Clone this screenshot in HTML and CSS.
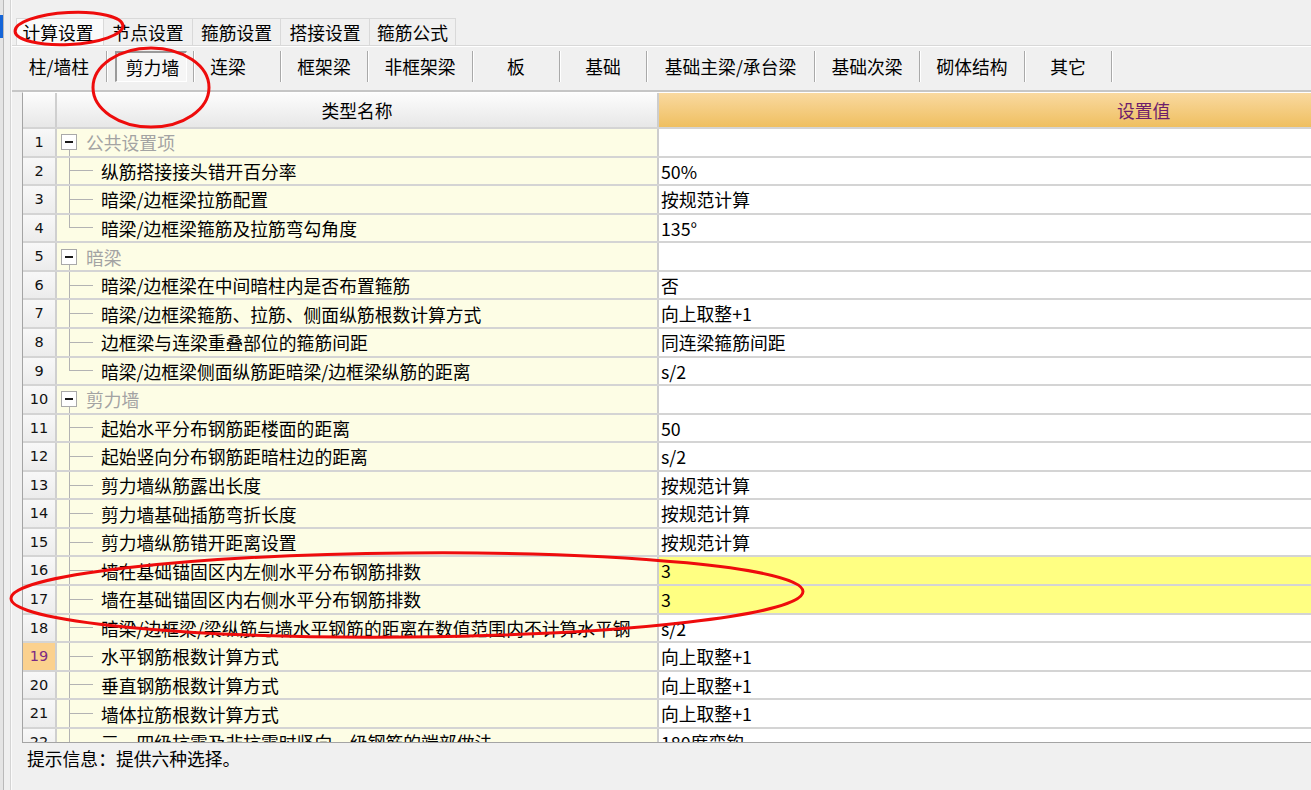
FILE: index.html
```html
<!DOCTYPE html>
<html lang="zh-CN">
<head>
<meta charset="utf-8">
<title>计算设置</title>
<link rel="stylesheet" href="styles.css">
</head>
<body>
<div class="app">
  <div class="side"><div class="side-mark"></div></div>
  <div class="main">
    <div class="tabs1">
      <div class="tab1 active w88">计算设置</div>
      <div class="tab1 w90">节点设置</div>
      <div class="tab1 w89">箍筋设置</div>
      <div class="tab1 w90">搭接设置</div>
      <div class="tab1 w87">箍筋公式</div>
    </div>
    <div class="tabs2">
      <div class="tab2 w87 nudge-l">柱/墙柱</div>
      <div class="tab2 w87 pressed"><span class="press-box">剪力墙</span></div>
      <div class="tab2 w87 nudge-ll">连梁</div>
      <div class="tab2 w87">框架梁</div>
      <div class="tab2 w105">非框架梁</div>
      <div class="tab2 w87">板</div>
      <div class="tab2 w87">基础</div>
      <div class="tab2 w168">基础主梁/承台梁</div>
      <div class="tab2 w105">基础次梁</div>
      <div class="tab2 w105">砌体结构</div>
      <div class="tab2 w87">其它</div>
    </div>
    <div class="grid-wrap">
      <div class="row head">
        <div class="num hnum"></div>
        <div class="name hname">类型名称</div>
        <div class="val hval">设置值</div>
      </div>

      <div class="row cat"><div class="num">1</div><div class="name"><span class="tree"><span class="box"></span></span><span class="cat-text">公共设置项</span></div><div class="val"></div></div>
      <div class="row child"><div class="num">2</div><div class="name"><span class="tree"></span>纵筋搭接接头错开百分率</div><div class="val">50%</div></div>
      <div class="row child"><div class="num">3</div><div class="name"><span class="tree"></span>暗梁/边框梁拉筋配置</div><div class="val">按规范计算</div></div>
      <div class="row child last"><div class="num">4</div><div class="name"><span class="tree"></span>暗梁/边框梁箍筋及拉筋弯勾角度</div><div class="val">135°</div></div>

      <div class="row cat"><div class="num">5</div><div class="name"><span class="tree"><span class="box"></span></span><span class="cat-text">暗梁</span></div><div class="val"></div></div>
      <div class="row child"><div class="num">6</div><div class="name"><span class="tree"></span>暗梁/边框梁在中间暗柱内是否布置箍筋</div><div class="val">否</div></div>
      <div class="row child"><div class="num">7</div><div class="name"><span class="tree"></span>暗梁/边框梁箍筋、拉筋、侧面纵筋根数计算方式</div><div class="val">向上取整+1</div></div>
      <div class="row child"><div class="num">8</div><div class="name"><span class="tree"></span>边框梁与连梁重叠部位的箍筋间距</div><div class="val">同连梁箍筋间距</div></div>
      <div class="row child last"><div class="num">9</div><div class="name"><span class="tree"></span>暗梁/边框梁侧面纵筋距暗梁/边框梁纵筋的距离</div><div class="val">s/2</div></div>

      <div class="row cat"><div class="num">10</div><div class="name"><span class="tree"><span class="box"></span></span><span class="cat-text">剪力墙</span></div><div class="val"></div></div>
      <div class="row child"><div class="num">11</div><div class="name"><span class="tree"></span>起始水平分布钢筋距楼面的距离</div><div class="val">50</div></div>
      <div class="row child"><div class="num">12</div><div class="name"><span class="tree"></span>起始竖向分布钢筋距暗柱边的距离</div><div class="val">s/2</div></div>
      <div class="row child"><div class="num">13</div><div class="name"><span class="tree"></span>剪力墙纵筋露出长度</div><div class="val">按规范计算</div></div>
      <div class="row child"><div class="num">14</div><div class="name"><span class="tree"></span>剪力墙基础插筋弯折长度</div><div class="val">按规范计算</div></div>
      <div class="row child"><div class="num">15</div><div class="name"><span class="tree"></span>剪力墙纵筋错开距离设置</div><div class="val">按规范计算</div></div>
      <div class="row child"><div class="num">16</div><div class="name"><span class="tree"></span>墙在基础锚固区内左侧水平分布钢筋排数</div><div class="val hl">3</div></div>
      <div class="row child"><div class="num">17</div><div class="name"><span class="tree"></span>墙在基础锚固区内右侧水平分布钢筋排数</div><div class="val hl">3</div></div>
      <div class="row child"><div class="num">18</div><div class="name"><span class="tree"></span>暗梁/边框梁/梁纵筋与墙水平钢筋的距离在数值范围内不计算水平钢</div><div class="val">s/2</div></div>
      <div class="row child"><div class="num cur">19</div><div class="name"><span class="tree"></span>水平钢筋根数计算方式</div><div class="val">向上取整+1</div></div>
      <div class="row child"><div class="num">20</div><div class="name"><span class="tree"></span>垂直钢筋根数计算方式</div><div class="val">向上取整+1</div></div>
      <div class="row child"><div class="num">21</div><div class="name"><span class="tree"></span>墙体拉筋根数计算方式</div><div class="val">向上取整+1</div></div>
      <div class="row child"><div class="num">22</div><div class="name"><span class="tree"></span>三、四级抗震及非抗震时竖向一级钢筋的端部做法</div><div class="val">180度弯钩</div></div>
    </div>
    <div class="status">提示信息：提供六种选择。</div>
  </div>
</div>
<svg class="marks" width="1311" height="790" viewBox="0 0 1311 790">
  <ellipse cx="69" cy="28.5" rx="54" ry="16" transform="rotate(-3 69 28.5)"/>
  <ellipse cx="151" cy="87.5" rx="58" ry="39.5"/>
  <ellipse cx="407" cy="595" rx="396" ry="42" transform="rotate(-0.5 407 595)"/>
</svg>
</body>
</html>
```

FILE: styles.css
```css
html, body {
  margin: 0;
  padding: 0;
}
body {
  width: 1311px;
  height: 790px;
  overflow: hidden;
  position: relative;
  background: #f0f0f0;
  font-family: "Noto Sans CJK SC", "Noto Sans CJK TC", sans-serif;
  font-size: 17.8px;
  color: #000;
}
.app {
  display: flex;
  height: 790px;
}
.side {
  width: 10px;
  flex: none;
  border-right: 1px solid #d4d4d4;
  background: linear-gradient(to right, #e4e4e4 0 3px, #b9b9b9 3px 4px, #efefef 4px);
  display: flex;
  flex-direction: column;
}
.side-mark {
  margin-top: 15px;
  width: 3px;
  height: 23px;
  background: #1565d8;
}
.main {
  flex: 1;
  min-width: 0;
  display: flex;
  flex-direction: column;
  border-left: 1px solid #fbfbfb;
}
.tabs1 {
  display: flex;
  margin: 18px 0 0 4px;
  height: 27px;
}
.tab1 {
  box-sizing: border-box;
  height: 27px;
  line-height: 26px;
  text-align: center;
  border: 1px solid #d9d9d9;
  border-bottom: none;
  margin-right: -1px;
  background: #f0f0f0;
  white-space: nowrap;
}
.tab1.active {
  background: #fafafa;
  padding-right: 4px;
}
.w87 { width: 87px; }
.w88 { width: 88px; }
.w89 { width: 89px; }
.w90 { width: 90px; }
.w105 { width: 105px; }
.w168 { width: 168px; }

.tabs2 {
  display: flex;
  align-items: flex-start;
  height: 31px;
  padding: 5px 0 8px 8px;
  border-top: 1px solid #d8d8d8;
  box-shadow: inset 0 1px 0 #ffffff;
  border-bottom: 2px solid #c6c6c6;
}
.tab2 {
  box-sizing: border-box;
  height: 31px;
  line-height: 30px;
  text-align: center;
  border-right: 1px solid #a9a9a9;
  box-shadow: 1px 0 0 #ffffff;
  white-space: nowrap;
}
.tab2.nudge-l {
  padding-right: 8px;
}
.tab2.nudge-ll {
  padding-right: 18px;
}
.tab2.pressed {
  display: flex;
  padding: 0 6px 0 8px;
}
.press-box {
  flex: 1;
  box-sizing: border-box;
  height: 31px;
  line-height: 29px;
  border-top: 2px solid #9a9a9a;
  border-left: 2px solid #9a9a9a;
  border-right: 1px solid #ffffff;
  border-bottom: 1px solid #ffffff;
  background: #f6f6f6;
  padding-left: 2px;
}

.grid-wrap {
  margin-left: 10px;
  height: 649px;
  overflow: hidden;
  border-left: 1px solid #a4a4a4;
  border-top: 1px solid #ffffff;
  border-bottom: 1px solid #a4a4a4;
  background: #ffffff;
}
.row {
  display: flex;
  box-sizing: border-box;
  height: 28.57px;
  border-top: 2px solid #d4d4d4;
}
.row.head {
  height: 34px;
  border-top: none;
}
.num {
  flex: none;
  width: 32px;
  border-right: 2px solid #cfcfcf;
  background: linear-gradient(#f8f8f8, #ececec);
  font-family: "DejaVu Sans", sans-serif;
  font-size: 14.5px;
  text-align: center;
  line-height: 27px;
  color: #111;
}
.num.cur {
  background: #fbd18e;
  color: #7b2a84;
}
.name {
  flex: none;
  width: 600px;
  display: flex;
  align-items: center;
  background: #fdfde5;
  white-space: nowrap;
  overflow: hidden;
  line-height: 26px;
}
.val {
  flex: 1;
  min-width: 0;
  border-left: 2px solid #cdcdcd;
  padding-left: 2px;
  line-height: 26px;
  white-space: nowrap;
  background: #ffffff;
}
.val.hl {
  background: #ffff82;
}
.hnum, .hname {
  background: linear-gradient(#fdfdfd, #e7e7e7);
}
.hname {
  justify-content: center;
  line-height: 34px;
}
.hval {
  background: linear-gradient(#f9d9a0, #efbf60);
  color: #6c1d6c;
  line-height: 34px;
  padding-left: 458px;
}
.tree {
  flex: none;
  align-self: stretch;
  width: 44px;
  display: flex;
  align-items: center;
}
.child .tree {
  background:
    linear-gradient(#b3b3b3, #b3b3b3) 12px 0 / 1px 100% no-repeat,
    linear-gradient(#b3b3b3, #b3b3b3) 12px 50% / 24px 1px no-repeat;
}
.child.last .tree {
  background:
    linear-gradient(#b3b3b3, #b3b3b3) 12px 0 / 1px 50% no-repeat,
    linear-gradient(#b3b3b3, #b3b3b3) 12px 50% / 24px 1px no-repeat;
}
.cat .tree {
  width: 29px;
  background: linear-gradient(#b3b3b3, #b3b3b3) 12px 100% / 1px 6px no-repeat;
}
.box {
  box-sizing: border-box;
  width: 16px;
  height: 16px;
  margin-left: 4px;
  border: 1px solid #a9a9a9;
  background: linear-gradient(#1a1a1a, #1a1a1a) center / 8px 2px no-repeat, #ffffff;
}
.cat-text {
  color: #a3a3a3;
}
.status {
  padding: 3px 0 0 15px;
  line-height: 24px;
}
.marks {
  position: absolute;
  left: 0;
  top: 0;
  pointer-events: none;
}
.marks ellipse {
  fill: none;
  stroke: #ee0c0c;
  stroke-width: 3;
}
```
